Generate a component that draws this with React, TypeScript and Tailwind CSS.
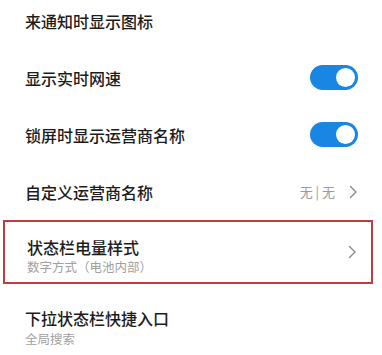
import React from "react";

function Toggle() {
  return (
    <div className="w-[48px] h-[25px] rounded-full bg-[#1a86e3] flex items-center justify-end pr-[3px]">
      <div className="w-[19px] h-[19px] rounded-full bg-white" />
    </div>
  );
}

function Chevron() {
  return (
    <svg width="9" height="14" viewBox="0 0 9 14" fill="none">
      <path d="M1.5 1.5 L7 7 L1.5 12.5" stroke="#8a8a8a" strokeWidth="1.4" strokeLinecap="round" strokeLinejoin="round" />
    </svg>
  );
}

function Row({ title, right }: { title: string; right?: React.ReactNode }) {
  return (
    <div className="h-[57px] px-[25px] pr-[24px] flex items-center justify-between">
      <span className="text-[16px] leading-[22px] font-medium text-[#1c1c1c]">{title}</span>
      {right}
    </div>
  );
}

export default function App() {
  return (
    <div className="w-[382px] h-[355px] overflow-hidden bg-white font-['Noto_Sans_CJK_SC','Noto_Sans',sans-serif]">
      <div className="-mt-[8px]">
        <Row title="来通知时显示图标" />
        <Row title="显示实时网速" right={<Toggle />} />
        <Row title="锁屏时显示运营商名称" right={<Toggle />} />
        <div className="h-[57px] pl-[25px] pr-[24px] flex items-center justify-between">
          <span className="text-[16px] leading-[22px] font-medium text-[#1c1c1c]">自定义运营商名称</span>
          <div className="flex items-center gap-[14px]">
            <span className="text-[13px] leading-[18px] text-[#9a9a9a]">无 | 无</span>
            <Chevron />
          </div>
        </div>
      </div>
      <div className="mx-[3px] w-[370px] h-[64px] border-2 border-[#c93a40] pl-[22px] pr-[14px] flex items-center justify-between">
        <div className="flex flex-col pt-[8px]">
          <span className="text-[16px] leading-[21px] font-medium text-[#1c1c1c]">状态栏电量样式</span>
          <span className="text-[12.5px] leading-[18px] text-[#a0a0a0]">数字方式（电池内部）</span>
        </div>
        <Chevron />
      </div>
      <div className="pt-[23px] px-[25px] flex flex-col">
        <span className="text-[16px] leading-[23px] font-medium text-[#1c1c1c]">下拉状态栏快捷入口</span>
        <span className="text-[12.5px] leading-[18px] text-[#a0a0a0]">全局搜索</span>
      </div>
    </div>
  );
}
